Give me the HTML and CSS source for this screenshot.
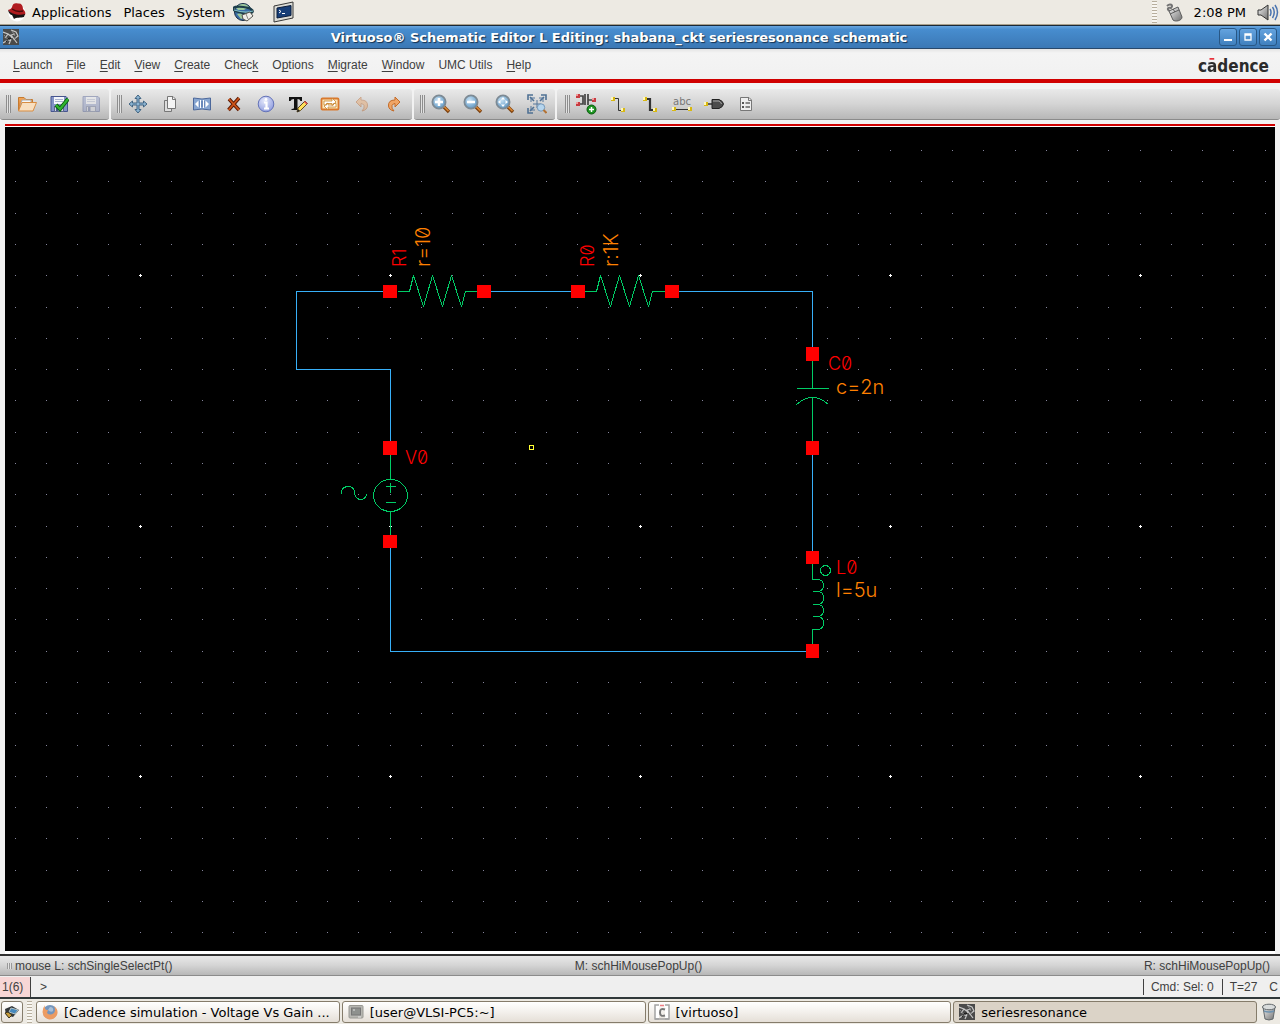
FILE: index.html
```html
<!DOCTYPE html>
<html lang="en">
<head>
  <meta charset="UTF-8">
  <meta name="viewport" content="width=device-width, initial-scale=1.0">
  <title>Virtuoso Schematic Editor L Editing: shabana_ckt seriesresonance schematic</title>
  <link rel="stylesheet" href="styles.css">
</head>
<body>
  <!-- Shared icons and gradients -->
  <svg class="defs" width="0" height="0" aria-hidden="true">
    <defs>
      <linearGradient id="gOrange" x1="0" y1="0" x2="0" y2="1"><stop offset="0" stop-color="#f3a85a"/><stop offset="1" stop-color="#d2701c"/></linearGradient>
      <linearGradient id="gPaper" x1="0" y1="0" x2="1" y2="1"><stop offset="0" stop-color="#fff"/><stop offset="1" stop-color="#c2c2c2"/></linearGradient>
      <radialGradient id="gLens" cx=".4" cy=".35" r=".7"><stop offset="0" stop-color="#c8e2f4"/><stop offset="1" stop-color="#5a94c2"/></radialGradient>
      <radialGradient id="gInfo" cx=".4" cy=".3" r=".8"><stop offset="0" stop-color="#e4e8fb"/><stop offset="1" stop-color="#8896dc"/></radialGradient>
      <linearGradient id="gMetal" x1="0" y1="0" x2="1" y2="1"><stop offset="0" stop-color="#f4f4f4"/><stop offset="1" stop-color="#707070"/></linearGradient>
    </defs>
    <symbol id="virtuoso" viewBox="0 0 16 16">
      <rect width="16" height="16" fill="#4a4a4a"/>
      <path d="M0 3L5 5L2 9M5 5L9 8L6 15M8 1L13 3L15 7L11 10L8 6L12 5M11 10L14 14M0 14L5 11L8 12" fill="none" stroke="#c8c8c8" stroke-width="1.2"/>
      <path d="M9 2L12 7M1 6L7 13M10 11L13 8" stroke="#8c8c8c" fill="none"/>
      <path d="M3 13L6 9L9 10" stroke="#161616" fill="none"/>
    </symbol>
    <symbol id="lens" viewBox="0 0 20 20">
      <path d="M12 12L18 18" stroke="#7d4210" stroke-width="3.4"/>
      <path d="M12 11.5L17.5 17" stroke="#d98632" stroke-width="1.6"/>
      <circle cx="8" cy="8" r="6.6" fill="url(#gLens)" stroke="#7d8a94" stroke-width="1.8"/>
    </symbol>
    <symbol id="floppy" viewBox="0 0 20 20">
      <path d="M2 2.5H17L18.5 4V17.5H2Z" fill="#8493c6" stroke="#47568f"/>
      <rect x="5" y="3" width="10" height="7" fill="#f4f6fb"/>
      <path d="M6 5.5H14M6 7.5H14" stroke="#aab3cf"/>
      <rect x="5.5" y="12.5" width="9" height="5" fill="#d6d9e2" stroke="#5b678f"/>
      <rect x="7" y="13" width="2.500" height="4" fill="#47568f"/>
    </symbol>
  </svg>

  <header class="panel">
    <nav class="panel-menu" aria-label="Desktop">
      <button class="panel-item">
        <svg class="hat" viewBox="0 0 20 20" width="20" height="20"><circle cx="10" cy="11" r="8.500" fill="#fff"/><path d="M1 8C3 7 4 7 5 5C6 1 8 1 11 1.500C14 1 16 3 16 7C18 9 19 11 18 13C13 15 4 13 1 8Z" fill="#b01c20"/><path d="M1 8C2 12 4 13 5 13L7 17C9 15 14 16 17 15L18 12C12 14 4 12 1 8Z" fill="#171314"/><path d="M5 7C8 9 12 10 16 9" stroke="#4c0b0d" stroke-width="1.5" fill="none"/></svg>
        Applications
      </button>
      <button class="panel-item">Places</button>
      <button class="panel-item">System</button>
      <button class="panel-item" aria-label="Web Browser">
        <svg viewBox="0 0 22 20" width="22" height="20"><circle cx="10" cy="10" r="8.500" fill="#3b6ea8" stroke="#172a40"/><path d="M3 6C6 1 13 1 16 5L11 8L5 8ZM4 12L8 11L11 16L8 17Z" fill="#9dc89a"/><ellipse cx="10" cy="8" rx="10" ry="3" fill="none" stroke="#1d3e4a" stroke-width="2" transform="rotate(8 10 8)"/><path d="M1 8C7 10 14 11 20 9" stroke="#80bec6" stroke-width="1.2" fill="none"/><path d="M9 13L17 10L20 14L14 19L10 17Z" fill="#f0efea" stroke="#55534d"/><path d="M13 12L15 17" stroke="#8b8981"/></svg>
      </button>
      <button class="panel-item" aria-label="Terminal">
        <svg viewBox="0 0 22 22" width="22" height="22"><path d="M1 5L20 1V17L1 21Z" fill="#dcdcd6" stroke="#383838"/><path d="M4 7L18 4.500V14.500L4 17Z" fill="#173e78" stroke="#0b1c3a"/><path d="M6 9L8 10.500L6 12M9 12.500H12" stroke="#fff" fill="none"/></svg>
      </button>
    </nav>
    <div class="panel-tray">
      <span class="dots-grip"></span>
      <svg viewBox="0 0 18 20" width="18" height="20"><path d="M2 4C5 1 9 3 6 6C2 5 2 8 5 9" fill="none" stroke="#747474" stroke-width="2"/><path d="M4 9L13 5L17 15C17 19 10 20 8 18Z" fill="url(#gMetal)" stroke="#5c5c5c"/><path d="M5 12L14 8M8 7L10 10" stroke="#5c5c5c"/></svg>
      <time class="clock">2:08 PM</time>
      <svg viewBox="0 0 22 20" width="22" height="20"><path d="M1 8V13H4L11 18V3L4 8Z" fill="url(#gMetal)" stroke="#333"/><path d="M13 7Q15 10 13 14M15.500 5Q19 10 15.500 16M18 3Q23 10 18 18" fill="none" stroke="#4a74b0" stroke-width="1.5"/></svg>
    </div>
  </header>

  <main class="window">
    <div class="titlebar">
      <svg width="16" height="16"><use href="#virtuoso"/></svg>
      <h1>Virtuoso® Schematic Editor L Editing: shabana_ckt seriesresonance schematic</h1>
      <div class="window-buttons">
        <button aria-label="Minimize"><svg viewBox="0 0 12 12" width="12" height="12"><path d="M2 9H10" stroke="#fff" stroke-width="2"/></svg></button>
        <button aria-label="Maximize"><svg viewBox="0 0 12 12" width="12" height="12"><path d="M3 3H9V9H3ZM3 4H9" fill="none" stroke="#fff" stroke-width="1.300"/></svg></button>
        <button aria-label="Close"><svg viewBox="0 0 12 12" width="12" height="12"><path d="M2.500 2.500L9.500 9.500M9.500 2.500L2.500 9.500" stroke="#fff" stroke-width="2.400"/></svg></button>
      </div>
    </div>

    <nav class="menubar" aria-label="Editor">
      <button><u>L</u>aunch</button>
      <button><u>F</u>ile</button>
      <button><u>E</u>dit</button>
      <button><u>V</u>iew</button>
      <button><u>C</u>reate</button>
      <button>Chec<u>k</u></button>
      <button>O<u>p</u>tions</button>
      <button><u>M</u>igrate</button>
      <button><u>W</u>indow</button>
      <button>UMC Utils</button>
      <button><u>H</u>elp</button>
      <span class="brand">c<span class="macron">ā</span>dence</span>
    </nav>

    <div class="toolbar">
      <div class="tool-group">
        <span class="grip"></span>
        <button aria-label="Open"><svg viewBox="0 0 20 20" width="20" height="20"><path d="M1.500 16.500V3.500H7L9 5.500H15.500V9" fill="url(#gOrange)" stroke="#c57a30"/><path d="M3 13L5 6H14V9" fill="#f7f7f7" stroke="#aaa"/><path d="M1.500 17L5 8.500H19.500L16 17Z" fill="#f8dfc0" stroke="#d88d42"/></svg></button>
        <button aria-label="Check and Save"><svg viewBox="0 0 20 20" width="20" height="20"><use href="#floppy"/><path d="M7 11L11 15L19 5" fill="none" stroke="#0b5c10" stroke-width="4"/><path d="M7 11L11 15L19 5" fill="none" stroke="#2fb52f" stroke-width="2.200"/></svg></button>
        <button aria-label="Save" disabled><svg viewBox="0 0 20 20" width="20" height="20"><use href="#floppy"/></svg></button>
      </div>
      <div class="tool-group">
        <span class="grip"></span>
        <button aria-label="Move"><svg viewBox="0 0 20 20" width="20" height="20"><path d="M10 1L13 4.500H11V9H15.500V7L19 10L15.500 13V11H11V15.500H13L10 19L7 15.500H9V11H4.500V13L1 10L4.500 7V9H9V4.500H7Z" fill="#8cb4d2" stroke="#426583"/></svg></button>
        <button aria-label="Copy"><svg viewBox="0 0 20 20" width="20" height="20"><path d="M4.500 6.500H11.500V17.500H4.500Z" fill="#ddd" stroke="#777"/><path d="M7.500 2.500H13L15.500 5V14.500H7.500Z" fill="#f4f4f4" stroke="#777"/><path d="M12.500 3V5.500H15" fill="none" stroke="#777"/></svg></button>
        <button aria-label="Stretch"><svg viewBox="0 0 20 20" width="20" height="20"><path d="M1.500 4Q10 6 18.500 4V16Q10 14 1.500 16Z" fill="#87a5d0" stroke="#4c689b"/><path d="M7 7H13V13H7Z" fill="#6b8abb"/><path d="M3 10L6.500 6.500V13.500ZM17 10L13.500 6.500V13.500Z" fill="#fff"/><path d="M8.500 6V14M11.500 6V14" stroke="#fff"/></svg></button>
        <button aria-label="Delete"><svg viewBox="0 0 20 20" width="20" height="20"><path d="M5 5L15 16M15 4L4.500 16" stroke="#5c1d08" stroke-width="3.600"/><path d="M5 5L15 16M15 4L4.500 16" stroke="#cf5418" stroke-width="1.700"/></svg></button>
        <button aria-label="Properties"><svg viewBox="0 0 20 20" width="20" height="20"><circle cx="10" cy="10" r="7.800" fill="url(#gInfo)" stroke="#6473b8"/><path d="M8 8.500H10.500V14M8 14.500H13" stroke="#fff" stroke-width="2.200" fill="none"/><circle cx="10" cy="5.500" r="1.400" fill="#fff"/></svg></button>
        <button aria-label="Edit Text" class="text-tool"><svg viewBox="0 0 20 20" width="20" height="20"><path d="M1 3H14V7H12.500Q12 5 9.500 5V14Q9.500 15 12 15V16H3.500V15Q6 15 6 14V5Q3 5 2.500 7H1Z" fill="#111"/><path d="M9 18L10 14L17 7L19.500 9.500L12.500 16.500Z" fill="#ffe05a" stroke="#5c4922"/><path d="M16 8L18.500 10.500L19.500 9.500L17 7Z" fill="#e34b55"/><path d="M9 18L10 15L12 17Z" fill="#222"/></svg></button>
        <button aria-label="Rotate"><svg viewBox="0 0 20 20" width="20" height="20"><rect x="1.500" y="4.500" width="17" height="11" rx="1" fill="#fbe6b8" stroke="#d9792d" stroke-width="1.800"/><path d="M4 11V7H12V4L16 8L12 11.500V9.500H6.500V11ZM16 9.500V13H8V16L4 12L8 9V11H13.500V9.500Z" fill="#fff" stroke="#c7852e" stroke-width=".8"/></svg></button>
        <button aria-label="Undo" disabled><svg viewBox="0 0 20 20" width="20" height="20"><path d="M4 8L9 3V6Q16 6 15.500 12Q15 16 10 17Q13 14 12 11.500Q11 9.500 9 9.500V13Z" fill="#eea05c" stroke="#b55c1e"/></svg></button>
        <button aria-label="Redo"><svg viewBox="0 0 20 20" width="20" height="20"><path d="M16 8L11 3V6Q4 6 4.500 12Q5 16 10 17Q7 14 8 11.500Q9 9.500 11 9.500V13Z" fill="#f0a566" stroke="#c36b28"/></svg></button>
      </div>
      <div class="tool-group">
        <span class="grip"></span>
        <button aria-label="Zoom In"><svg viewBox="0 0 20 20" width="20" height="20"><use href="#lens"/><path d="M8 4V12M4 8H12" stroke="#fff" stroke-width="2.500"/></svg></button>
        <button aria-label="Zoom Out"><svg viewBox="0 0 20 20" width="20" height="20"><use href="#lens"/><path d="M4 8H12" stroke="#fff" stroke-width="2.500"/></svg></button>
        <button aria-label="Zoom Fit"><svg viewBox="0 0 20 20" width="20" height="20"><use href="#lens"/><path d="M8 3L10 5.500H6ZM8 13L10 10.500H6ZM3 8L5.500 6V10ZM13 8L10.500 6V10Z" fill="#fff"/></svg></button>
        <button aria-label="Zoom Area"><svg viewBox="0 0 20 20" width="20" height="20"><path d="M1 6V1H6M14 1H19V6M1 14V19H6M3 3L7 7M17 3L13 7M3 17L7 13" stroke="#4f7194" stroke-width="1.600" fill="none"/><path d="M4 8V4H8M12 4H16V8M4 12V16H8M10 6V14M6 10H14" stroke="#54779b" fill="none"/><circle cx="14" cy="13.500" r="3.700" fill="#b5d5ee" stroke="#7598b8"/><path d="M16.500 16L19.500 19" stroke="#b37335" stroke-width="2"/></svg></button>
      </div>
      <div class="tool-group last">
        <span class="grip"></span>
        <button aria-label="Create Instance"><svg viewBox="0 0 22 22" width="22" height="22"><path d="M4 3H8V11H4M10 1V12M13 1V12M13 7H18" stroke="#444" stroke-width="1.700" fill="none"/><path d="M1 1H5V5H1ZM1 9H5V13H1ZM17 5H21V9H17Z" fill="#c83a40"/><path d="M1 1H3V3H1ZM1 9H3V11H1ZM17 5H19V7H17Z" fill="#f29a9a"/><circle cx="16.500" cy="16.500" r="4.500" fill="#1b9420" stroke="#0a5a0e"/><path d="M16.500 14V19M14 16.500H19" stroke="#fff" stroke-width="1.500"/></svg></button>
        <button aria-label="Create Wire"><svg viewBox="0 0 20 20" width="20" height="20"><path d="M5 4.500H10.500V16.500H14" stroke="#333" fill="none"/><path d="M3 3H7V7H3ZM13 14H17V18H13Z" fill="#d8b810"/><path d="M3 3H5V6H3ZM13 14H15V17H13Z" fill="#fff7ba"/></svg></button>
        <button aria-label="Create Wide Wire"><svg viewBox="0 0 20 20" width="20" height="20"><path d="M5 5H10V16H14" stroke="#333" stroke-width="2.200" fill="none"/><path d="M3 3H7V7H3ZM13 14H17V18H13Z" fill="#d8b810"/><path d="M3 3H5V6H3ZM13 14H15V17H13Z" fill="#fff7ba"/></svg></button>
        <button aria-label="Wire Name" class="wire-name">abc<svg viewBox="0 0 20 4" width="20" height="4"><path d="M3 2.500H17" stroke="#333"/><path d="M0 0H4V4H0ZM16 0H20V4H16Z" fill="#d8b810"/><path d="M0 0H2V3H0ZM16 0H18V3H16Z" fill="#fff7ba"/></svg></button>
        <button aria-label="Create Pin"><svg viewBox="0 0 22 20" width="22" height="20"><path d="M3 10H9" stroke="#333" stroke-width="1.500"/><path d="M9 5.500H16Q20 7 20.500 10Q20 13 16 14.500H9Z" fill="#4c4c4c" stroke="#222"/><path d="M10 7H16Q18 8 18.500 10" stroke="#a8a8a8" fill="none"/><path d="M1 8H5V12H1Z" fill="#d8b810"/><path d="M1 8H3V11H1Z" fill="#fff7ba"/></svg></button>
        <button aria-label="Create Note"><svg viewBox="0 0 20 20" width="20" height="20"><path d="M4.500 3.500H13L15.500 6V16.500H4.500Z" fill="#eee" stroke="#777"/><path d="M12.500 4V6.500H15" stroke="#777" fill="none"/><path d="M6 8H8V10H6ZM6 12H8V14H6Z" fill="#555"/><path d="M9.500 9H14M9.500 13H14" stroke="#666" stroke-width="1.500"/></svg></button>
      </div>
    </div>

    <div class="canvas-frame">
      <svg class="canvas" id="canvas" role="img" aria-label="Series resonance schematic">
        <defs>
          <path id="resistor" d="M7 0H19L23 -16L33 15L42 -16L52 15L61 -16L71 15L75 0H88"/>
        </defs>
        <path id="minorGrid" class="minor"/>
        <path id="majorGrid" class="major"/>

        <g class="drawing" transform="translate(.5 .5)">
          <path class="wire" d="M385 164H291V242H385V321M479 164H573M667 164H807V227M807 321V431M807 524H385V414"/>
          <use class="device" href="#resistor" x="385" y="164"/>
          <use class="device" href="#resistor" x="572" y="164"/>
          <!-- capacitor -->
          <path class="device" d="M807 233V261M791 261H823M791 277Q807 263 823 277M807 270V315"/>
          <!-- inductor -->
          <path class="device" d="M807 436V452H814Q818 454 818 457V459Q818 462 814 464M807 464H814Q818 466 818 469V472Q818 475 814 477M807 477H814Q818 479 818 482V484Q818 487 814 489M807 489H814Q818 491 818 495V497Q818 500 814 502H807V518"/>
          <circle class="device" cx="820" cy="443" r="5"/>
          <!-- AC source -->
          <path class="device" d="M385 327V352M385 384V409M380 359H390M385 355V365M380 375H390M336 366V363Q338 359 343 359Q349 359 349 366Q350 372 356 372Q361 371 361 366"/>
          <ellipse class="device" cx="385" cy="368" rx="17" ry="16"/>
          <rect class="cursor" x="524" y="318" width="4" height="4"/>
        </g>

        <g class="pins">
          <rect x="378" y="158" width="14" height="13"/>
          <rect x="472" y="158" width="14" height="13"/>
          <rect x="566" y="158" width="14" height="13"/>
          <rect x="660" y="158" width="14" height="13"/>
          <rect x="801" y="220" width="13" height="14"/>
          <rect x="801" y="314" width="13" height="14"/>
          <rect x="801" y="424" width="13" height="13"/>
          <rect x="801" y="517" width="13" height="14"/>
          <rect x="378" y="314" width="14" height="14"/>
          <rect x="378" y="408" width="14" height="13"/>
        </g>

        <text class="name" transform="translate(401 140) rotate(-90)">R1</text>
        <text class="value" transform="translate(425 140) rotate(-90)">r=10</text>
        <text class="name" transform="translate(589 140) rotate(-90)">R0</text>
        <text class="value" transform="translate(613 140) rotate(-90)">r:1K</text>
        <text class="name" x="823" y="243">C0</text>
        <text class="value" x="831" y="267">c=2n</text>
        <text class="name" x="400" y="337">V0</text>
        <text class="name" x="831" y="447">L0</text>
        <text class="value" x="831" y="470">l=5u</text>
      </svg>
    </div>

    <div class="mouse-bar">
      <span class="left"><i class="small-grip"></i>mouse L: schSingleSelectPt()</span>
      <span>M: schHiMousePopUp()</span>
      <span class="right">R: schHiMousePopUp()</span>
    </div>

    <div class="command-bar">
      <label class="counter" for="command">1(6)</label>
      <input id="command" type="text" value="&gt;">
      <span class="state">Cmd: Sel: 0</span>
      <span class="state temp">T=27</span>
      <span class="state unit">C</span>
    </div>
  </main>

  <footer class="taskbar">
    <button class="show-desktop" aria-label="Show Desktop"><svg viewBox="0 0 16 16" width="16" height="16"><path d="M1 5L8 2L15 6L9 13L2 11Z" fill="#33373a"/><path d="M7 4L14 6L11 10L5 8Z" fill="#4688bd" stroke="#b6c4c4"/><path d="M1 9L4 8L8 11L5 14Z" fill="#c79d3d" stroke="#39321f"/></svg></button>
    <span class="dots-grip"></span>
    <button class="task">
      <svg viewBox="0 0 16 16" width="16" height="16"><circle cx="8" cy="8" r="7" fill="#7395bd"/><path d="M3 1C2 5 4 6 6 6L5 9Q8 12 12 9Q14 6 12 2Q17 6 15 11Q12 16 7 15.500Q1 14 .5 8Q.5 4 3 1Z" fill="#ec9b62"/><path d="M8 3Q12 3 11 7Q9 9 6 6Z" fill="#a9bed5"/></svg>
      <span>[Cadence simulation - Voltage Vs Gain ...</span>
    </button>
    <button class="task">
      <svg viewBox="0 0 16 16" width="16" height="16"><rect x="1" y="1.500" width="14" height="12.500" rx="1" fill="#b7b7b2" stroke="#989893"/><rect x="3.500" y="4" width="9" height="7" fill="#8e918e" stroke="#777"/><path d="M5 6H7M10 13H13" stroke="#e4e4e4"/></svg>
      <span>[user@VLSI-PC5:~]</span>
    </button>
    <button class="task">
      <svg viewBox="0 0 16 16" width="16" height="16"><path d="M5 1H1V15H5M11 1H15V15H11" fill="#fff" stroke="#a3a3a3" stroke-width="1.500"/><path d="M1 15H15" stroke="#a3a3a3" stroke-width="1.500"/><path d="M11 5.500Q6 3.500 6 8.500Q6 13 11 11.500" fill="none" stroke="#777" stroke-width="2"/><path d="M6 1.500H10" stroke="#ef7e84" stroke-width="1.500"/></svg>
      <span>[virtuoso]</span>
    </button>
    <button class="task active">
      <svg width="16" height="16"><use href="#virtuoso"/></svg>
      <span>seriesresonance</span>
    </button>
    <button class="trash" aria-label="Trash"><svg viewBox="0 0 16 18" width="16" height="18"><path d="M2 4L4 16Q8 18 12 16L14 4Z" fill="url(#gMetal)" stroke="#62686b"/><ellipse cx="8" cy="4" rx="6.500" ry="2.800" fill="#d9dcdc" stroke="#62686b"/><path d="M3 8Q8 10 13 8" stroke="#6e92ae" stroke-width="1.500" fill="none"/></svg></button>
  </footer>

  <script>
    // Grid dots: one minor dot per step, a brighter one every eighth step
    const canvas = document.getElementById("canvas");
    const stepX = 31.25;
    const stepY = 31.28;
    const originX = 135;
    const originY = 148.3;

    function drawGrid() {
      const box = canvas.getBoundingClientRect();
      let minor = "";
      let major = "";
      for (let i = -4; originX + i * stepX < box.width; i++) {
        for (let j = -4; originY + j * stepY < box.height; j++) {
          const x = Math.floor(originX + i * stepX);
          const y = Math.round(originY + j * stepY);
          if (i % 8 === 0 && j % 8 === 0) {
            major += `M${x - 1} ${y}h3v1h-3zM${x} ${y - 1}h1v3h-1z`;
          } else {
            minor += `M${x} ${y}h1v1h-1z`;
          }
        }
      }
      document.getElementById("minorGrid").setAttribute("d", minor);
      document.getElementById("majorGrid").setAttribute("d", major);
    }

    drawGrid();
    window.addEventListener("resize", drawGrid);
  </script>
</body>
</html>
```
FILE: styles.css
```css
* {
  box-sizing: border-box;
}
body {
  margin: 0;
  height: 100vh;
  display: flex;
  flex-direction: column;
  background-color: #edeae3;
  font-family: "DejaVu Sans", sans-serif;
  font-size: 13px;
  color: #000;
  overflow: hidden;
}
button {
  margin: 0;
  padding: 0;
  border: none;
  background: none;
  font: inherit;
  color: inherit;
}
svg {
  flex: none;
  display: block;
}
.defs {
  position: absolute;
}

/* Desktop panel */
.panel {
  height: 25px;
  display: flex;
  align-items: center;
  justify-content: space-between;
  border-bottom: 1px solid #a9a08c;
  padding: 0 1px 0 7px;
}
.panel-menu,
.panel-tray,
.panel-item {
  display: flex;
  align-items: center;
}
.panel-menu {
  gap: 12px;
}
.panel-item {
  gap: 5px;
}
.panel-item:nth-child(4) {
  margin-left: -4px;
}
.panel-item:nth-child(5) {
  margin-left: 6px;
}
.panel-tray {
  gap: 11px;
}
.dots-grip {
  width: 5px;
  height: 22px;
  background: repeating-linear-gradient(#b7ae9d 0 1px, #f8f6f1 1px 3px);
}
.panel-tray .dots-grip {
  margin-right: -3px;
}

/* Editor window */
.window {
  flex: 1;
  min-height: 0;
  display: flex;
  flex-direction: column;
  background-color: #f2f2f2;
  border-bottom: 2px solid #30383a;
  font-family: "Liberation Sans", Arial, sans-serif;
  font-size: 12px;
  color: #404040;
}
.titlebar {
  height: 24px;
  display: flex;
  align-items: center;
  padding: 0 3px;
  border-top: 1px solid #182838;
  border-bottom: 1px solid #29486a;
  background: linear-gradient(#6aa6e0, #478dcf 15%, #3b78b5);
}
.titlebar h1 {
  flex: 1;
  margin: 0;
  text-align: center;
  font: bold 13px "DejaVu Sans", sans-serif;
  color: #fff;
  text-shadow: 1px 1px 1px #16314e;
}
.window-buttons {
  display: flex;
  gap: 2px;
}
.window-buttons button {
  width: 18px;
  height: 18px;
  display: grid;
  place-items: center;
  border: 1px solid #285785;
  border-radius: 3px;
  background: linear-gradient(#64a3df, #4080be);
}
.menubar {
  height: 34px;
  display: flex;
  align-items: center;
  gap: 14px;
  padding: 2px 11px 0 13px;
  border-bottom: 4px solid #d00000;
  background: linear-gradient(#e4e4e4, #f4f4f4 4px, #f1f1f1);
}
.menubar u {
  text-underline-offset: 2px;
}
.brand {
  margin-left: auto;
  padding-top: 2px;
  font: bold 17px "DejaVu Sans Condensed", "DejaVu Sans", sans-serif;
  color: #2b2b2b;
}
.macron {
  color: transparent;
  background: linear-gradient(#e8323c 6px, #2b2b2b 6px);
  background-clip: text;
  -webkit-background-clip: text;
}

/* Toolbar */
.toolbar {
  display: flex;
  gap: 2px;
  padding: 6px 0 4px;
}
.tool-group {
  height: 31px;
  display: flex;
  align-items: center;
  padding: 0 2px 0 6px;
  border-bottom: 1px solid #8b8b8b;
  border-radius: 3px;
  background: linear-gradient(#e9e9e9, #d4d4d4 50%, #b7b7b7);
}
.tool-group.last {
  flex: 1;
  padding-left: 8px;
}
.grip {
  width: 5px;
  height: 18px;
  background: repeating-linear-gradient(90deg, #8e8e8e 0 1px, #e2e2e2 1px 2px);
}
.tool-group button {
  width: 32px;
  height: 28px;
  display: flex;
  align-items: center;
  justify-content: center;
}
.tool-group button:disabled {
  opacity: 0.4;
}
.tool-group .wire-name {
  flex-direction: column;
  font: 10px/10px "DejaVu Sans", sans-serif;
  color: #777;
}

/* Schematic canvas */
.canvas-frame {
  flex: 1;
  min-height: 0;
  margin: 0 5px;
  border-top: 2px solid #d00000;
  background-color: #fff;
  padding: 1px 0 3px;
}
.canvas {
  width: 100%;
  height: 100%;
  background-color: #000;
}
.drawing,
.pins,
.minor,
.major {
  shape-rendering: crispEdges;
}
.minor {
  fill: #85859c;
}
.major {
  fill: #fff;
}
.wire,
.device,
.cursor {
  fill: none;
  stroke-width: 1px;
  stroke-linejoin: bevel;
}
.wire {
  stroke: #38b0f8;
}
.device {
  stroke: #00cc66;
}
.cursor {
  stroke: #ffff33;
  stroke-linejoin: miter;
}
.pins {
  fill: #f00;
}
.name,
.value {
  font-family: Inter, sans-serif;
  font-weight: 300;
  font-feature-settings: "zero";
}
.name {
  font-size: 18px;
  fill: #f00;
}
.value {
  font-size: 20px;
  fill: #ff8000;
}

/* Status bars */
.mouse-bar {
  height: 22px;
  display: grid;
  grid-template-columns: 1fr auto 1fr;
  align-items: center;
  padding: 0 10px 0 7px;
  border-top: 2px solid #303030;
  border-bottom: 1px solid #8b8b8b;
  background: linear-gradient(#e9e9e9, #d4d4d4 50%, #b7b7b7);
}
.left {
  display: flex;
  align-items: center;
  gap: 3px;
}
.right {
  text-align: right;
}
.small-grip {
  width: 5px;
  height: 6px;
  background: repeating-linear-gradient(90deg, #999 0 1px, #e2e2e2 1px 2px);
}
.command-bar {
  height: 21px;
  display: flex;
  align-items: center;
  background-color: #efefef;
}
.counter {
  width: 31px;
  height: 20px;
  padding-left: 2px;
  line-height: 20px;
  border-right: 1px solid #404040;
  background-color: #f7d6d6;
}
.command-bar input {
  flex: 1;
  min-width: 0;
  height: 20px;
  padding: 0 9px;
  border: none;
  outline: none;
  background: none;
  font: inherit;
  color: inherit;
}
.state {
  padding: 0 8px 0 7px;
  line-height: 16px;
  border-left: 1px solid #404040;
}
.state.unit {
  padding: 0 2px 0 4px;
  border: none;
}

/* Taskbar */
.taskbar {
  height: 25px;
  display: flex;
  align-items: center;
  gap: 2px;
  padding: 1px 3px 0 1px;
}
.taskbar .dots-grip {
  margin: 0 2px;
}
.show-desktop,
.task {
  height: 22px;
  display: flex;
  align-items: center;
  border: 1px solid #857c6b;
  border-radius: 3px;
  background: linear-gradient(#fff, #f3f0ec 50%, #e5dfd7);
}
.show-desktop {
  width: 22px;
  justify-content: center;
}
.task {
  flex: 1;
  min-width: 0;
  gap: 6px;
  padding: 0 5px;
  white-space: nowrap;
}
.task.active {
  background: #dbd3c7;
}
.trash {
  margin-left: 2px;
}
```
